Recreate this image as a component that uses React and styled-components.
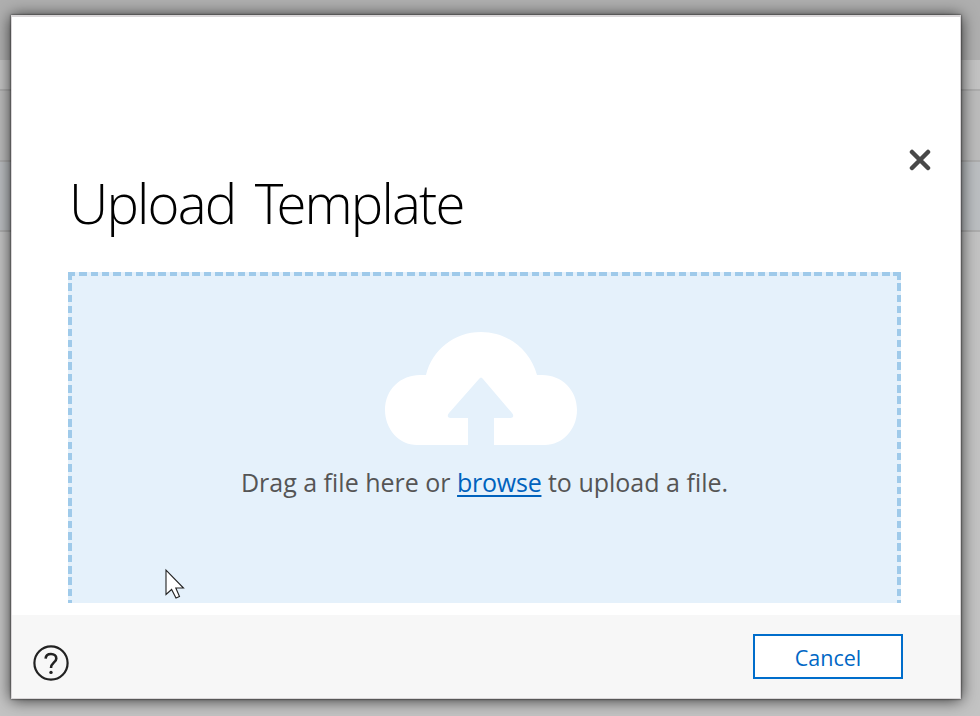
import React from "react";
import styled, { createGlobalStyle } from "styled-components";

const GlobalStyle = createGlobalStyle`
  * {
    box-sizing: border-box;
  }
  body {
    margin: 0;
    overflow: hidden;
    font-family: "Segoe UI", "Open Sans", "Noto Sans", sans-serif;
  }
`;

const Page = styled.div`
  position: relative;
  width: 980px;
  height: 716px;
  padding: 15px 19px 17px 11px;
  overflow: hidden;
  background: #c3c3c3;
`;

const Backdrop = styled.div`
  position: absolute;
  inset: 0;
`;

const Band = styled.div`
  height: ${(props) => props.$height}px;
  background: ${(props) => props.$color};
  border-bottom: ${(props) => (props.$line ? "2px solid #adadad" : "none")};
`;

const Modal = styled.div`
  position: relative;
  display: flex;
  flex-direction: column;
  width: 950px;
  height: 684px;
  background: #fff;
  border: 1px solid #d9d6d8;
  border-top-width: 2px;
  box-shadow: 0 0 2px 0 rgba(0, 0, 0, 0.8), 0 1px 15px 0 rgba(0, 0, 0, 0.75);
`;

const ModalHeader = styled.div`
  display: flex;
  justify-content: flex-end;
  padding: 132px 29px 0 0;
`;

const CloseButton = styled.button`
  width: 22px;
  height: 22px;
  padding: 0;
  border: none;
  background: none;
  svg {
    display: block;
  }
`;

const ModalBody = styled.div`
  height: 439px;
  margin-top: -7px;
  padding: 0 59px 0 56px;
  overflow: hidden;
`;

const Title = styled.h1`
  height: 108px;
  margin: 0;
  padding: 1px 0 0 1px;
  font-weight: 300;
  font-size: 54.5px;
  line-height: 76px;
  letter-spacing: -1.8px;
  word-spacing: 7px;
  white-space: nowrap;
  color: #000;
`;

const TightCap = styled.span`
  letter-spacing: -7px;
`;

const dash = "#9fcaea 0 7.5px, transparent 7.5px 11.308px";

const DropZone = styled.div`
  display: flex;
  flex-direction: column;
  align-items: center;
  width: 833px;
  height: 420px;
  padding-top: 60px;
  background: repeating-linear-gradient(to right, ${dash}) 0 0 / 100% 4px no-repeat,
    repeating-linear-gradient(to bottom, ${dash}) 0 0 / 4px 100% no-repeat,
    repeating-linear-gradient(to bottom, ${dash}) 100% 0 / 4px 100% no-repeat,
    #e5f1fb;
`;

const CloudIcon = styled.svg`
  display: block;
  margin-right: 7px;
`;

const DropText = styled.p`
  margin: 17px 0 0;
  font-size: 25px;
  line-height: 40px;
  white-space: nowrap;
  color: #555;
`;

const BrowseLink = styled.a`
  letter-spacing: -0.25px;
  color: #0062bd;
  text-decoration: underline;
  text-decoration-thickness: 2px;
  text-underline-offset: 3px;
`;

const ModalFooter = styled.div`
  display: flex;
  justify-content: space-between;
  align-items: flex-start;
  flex: 1;
  margin-top: 12px;
  padding: 19px 57px 0 20px;
  background: #f7f7f7;
`;

const HelpIcon = styled.svg`
  display: block;
  margin-top: 10px;
`;

const CancelButton = styled.button`
  width: 150px;
  height: 45px;
  padding: 2px 0 0;
  border: 2px solid #006dcb;
  background: #fff;
  font-family: inherit;
  font-size: 21.5px;
  color: #0067c5;
`;

const Cursor = styled.svg`
  position: absolute;
  left: 164px;
  top: 568px;
`;

const App = () => {
  return (
    <>
      <GlobalStyle />
      <Page>
        <Backdrop>
          <Band $height={60} $color="#afafaf" />
          <Band $height={31} $color="#c3c3c3" $line />
          <Band $height={71} $color="#bcbcbc" $line />
          <Band $height={70} $color="#bbbec1" $line />
        </Backdrop>
        <Modal>
          <ModalHeader>
            <CloseButton aria-label="Close">
              <svg width="22" height="22" viewBox="0 0 22 22">
                <path
                  d="M3 3L19 19M19 3L3 19"
                  stroke="#484848"
                  strokeWidth="4.5"
                  strokeLinecap="round"
                />
              </svg>
            </CloseButton>
          </ModalHeader>
          <ModalBody>
            <Title>
              Upload <TightCap>T</TightCap>emplate
            </Title>
            <DropZone>
              <CloudIcon width="192" height="113" viewBox="0 0 192 113">
                <path
                  fill="#fff"
                  d="M32 113C14 113 0 97 0 78C0 57 16 43 35 43H41C47 18 69 0 96 0C123 0 145 18 152 43H157C177 43 192 58 192 78C192 98 177 113 160 113H109V86H126Q130 85 127 81L98 47Q96 44 94 47L64 81Q61 85 65 86H83V113Z"
                />
              </CloudIcon>
              <DropText>
                Drag a file here or <BrowseLink>browse</BrowseLink> to upload a
                file.
              </DropText>
            </DropZone>
          </ModalBody>
          <ModalFooter>
            <HelpIcon width="38" height="38" viewBox="0 0 38 38" fill="none">
              <circle cx="19" cy="19" r="16.6" stroke="#222" strokeWidth="2.2" />
              <path
                d="M13.6 14.6C13.8 11.6 16 10 19 10C22.2 10 24.3 11.8 24.3 14.4C24.3 18.4 19 18.6 19 24"
                stroke="#222"
                strokeWidth="2.6"
              />
              <circle cx="19" cy="28.4" r="1.7" fill="#222" />
            </HelpIcon>
            <CancelButton>Cancel</CancelButton>
          </ModalFooter>
        </Modal>
        <Cursor width="22" height="32" viewBox="0 0 22 32">
          <path
            d="M2 2V26.5L7.6 21.5L12 30L15.5 28.5L11.8 20H19.5Z"
            fill="#fff"
            stroke="#222"
            strokeWidth="1.1"
          />
        </Cursor>
      </Page>
    </>
  );
};

export default App;
